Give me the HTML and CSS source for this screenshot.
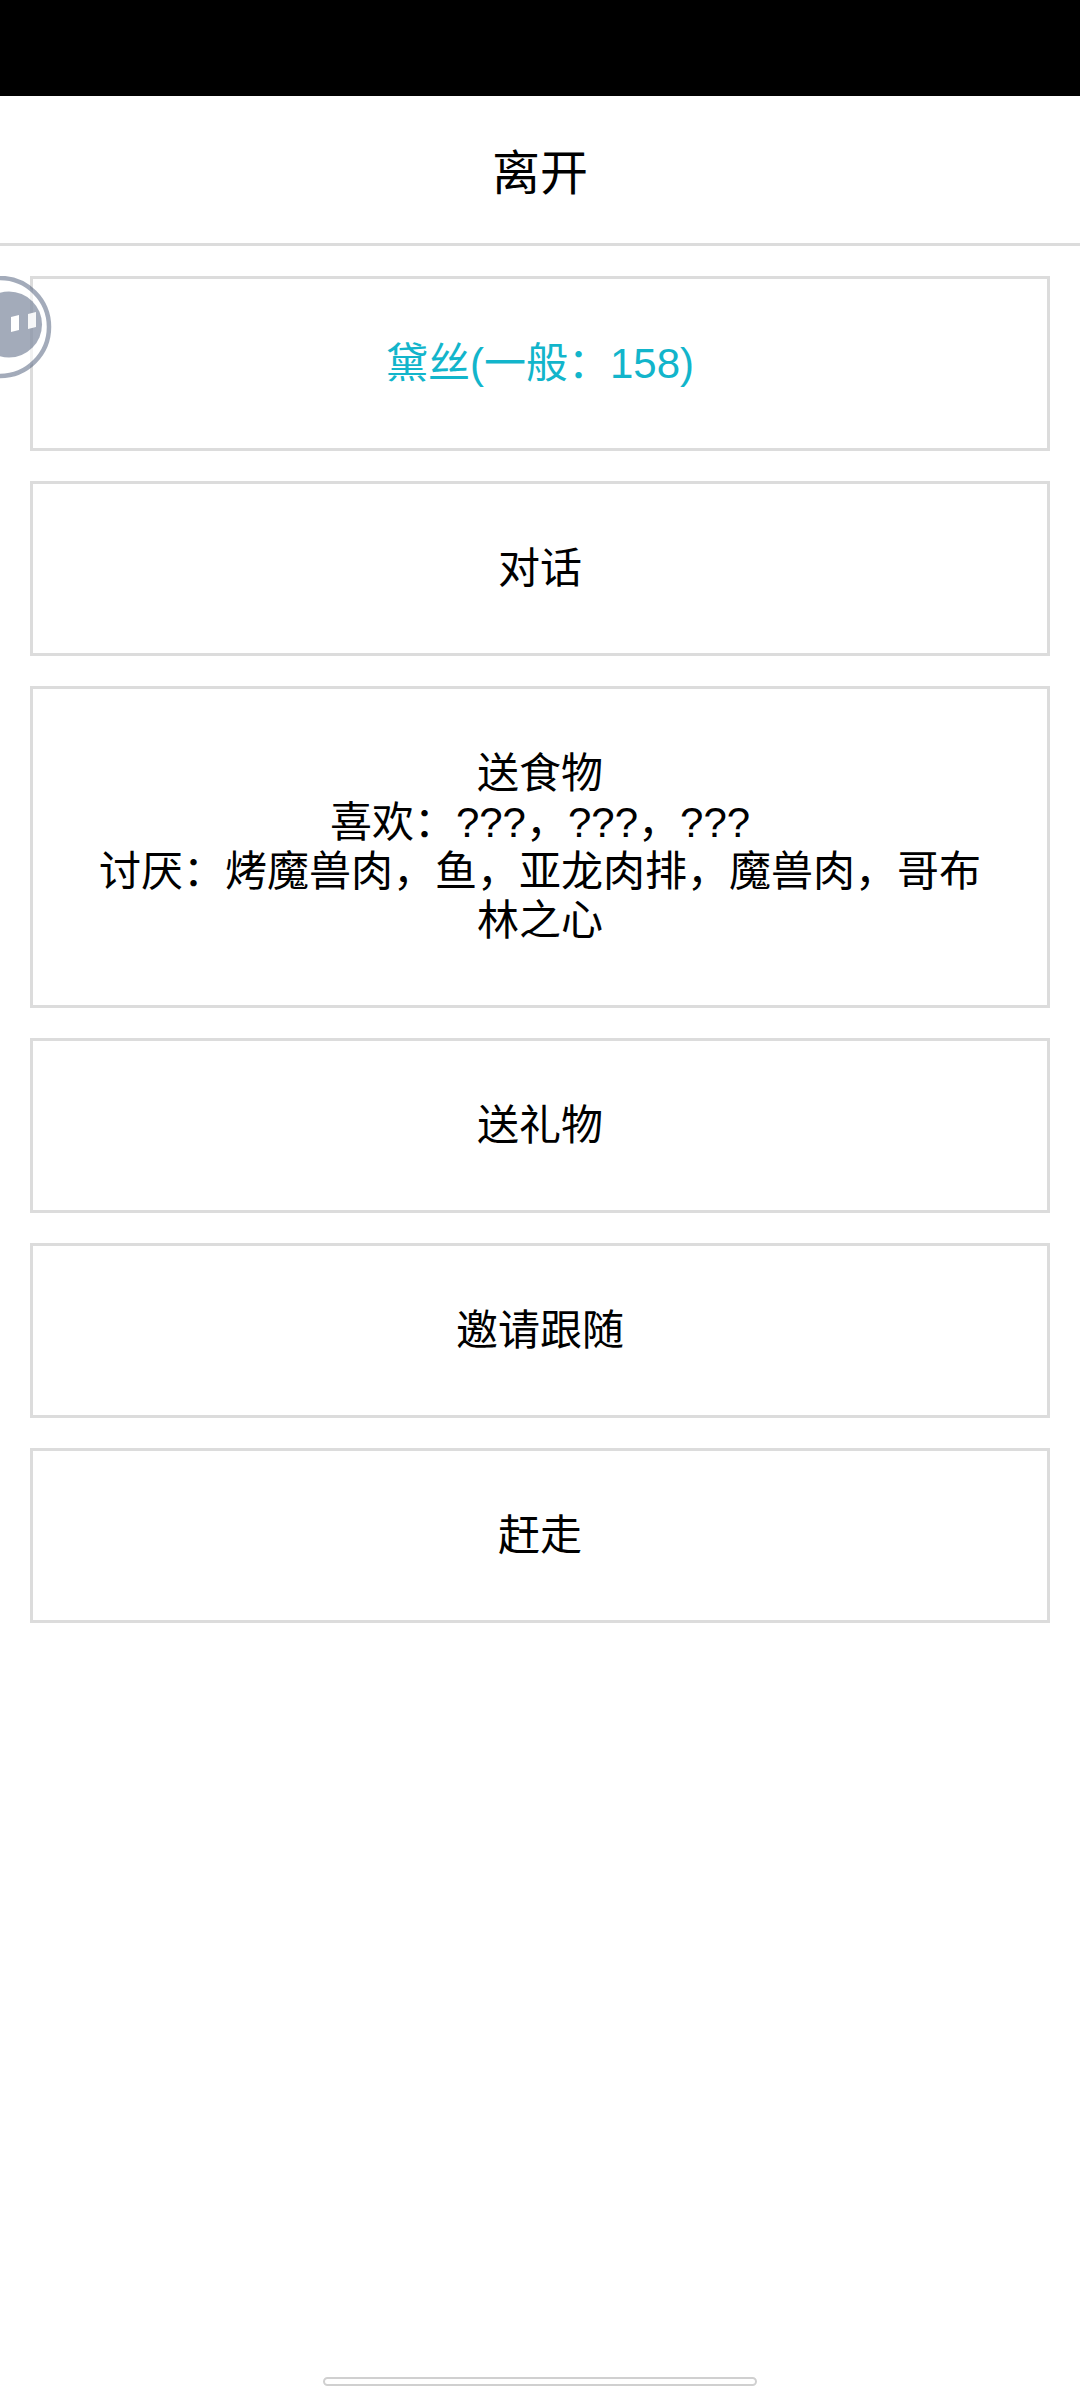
FILE: index.html
```html
<!DOCTYPE html>
<html lang="zh-CN">
<head>
    <meta charset="UTF-8">
    <title>离开</title>
    <link rel="stylesheet" href="styles.css">
</head>
<body>
<div class="status-bar"></div>
<div class="header">离开</div>
<ul class="menu">
    <li class="item item-cyan">黛丝(一般&#65306;158)</li>
    <li class="item">对话</li>
    <li class="item">送食物<br>喜欢&#65306;???&#65292;???&#65292;???<br>讨厌&#65306;烤魔兽肉&#65292;鱼&#65292;亚龙肉排&#65292;魔兽肉&#65292;哥布林之心</li>
    <li class="item">送礼物</li>
    <li class="item">邀请跟随</li>
    <li class="item">赶走</li>
</ul>
<div class="float-ball">
    <svg width="53" height="106" viewBox="0 0 53 106">
        <circle cx="0" cy="51" r="49" fill="#fff" fill-opacity="0.6" stroke="#2a3c60" stroke-opacity="0.43" stroke-width="4.5"/>
        <circle cx="9" cy="48.500" r="33" fill="#2a3c60" fill-opacity="0.43"/>
        <path d="M11 41l8-2v15l-8 2z" fill="#fff"/>
        <path d="M28 38l8-2v15l-8 2z" fill="#fff" fill-opacity="0.9"/>
    </svg>
</div>
<div class="home-bar"></div>
</body>
</html>
```

FILE: styles.css
```css
* {
    margin: 0;
    padding: 0;
    box-sizing: border-box;
}
html, body {
    height: 100%;
}
body {
    position: relative;
    display: flex;
    flex-direction: column;
    background: #fff;
    color: #000;
    font-family: "Liberation Sans", "Noto Sans CJK SC", sans-serif;
    overflow: hidden;
}
.status-bar {
    height: 96px;
    background: #000;
}
.header {
    height: 150px;
    padding-top: 9px;
    line-height: 138px;
    text-align: center;
    font-size: 48px;
    border-bottom: 3px solid #dcdcdc;
}
.menu {
    list-style-type: none;
    display: flex;
    flex-direction: column;
    gap: 30px;
    padding: 30px 30px 0 30px;
    width: 1080px;
}
.item {
    padding: 60px;
    border: 3px solid #dcdcdc;
    font-size: 42px;
    line-height: 49px;
    text-align: center;
}
.item-cyan {
    color: #12b5cb;
}
.float-ball {
    position: absolute;
    left: 0;
    top: 276px;
    width: 53px;
    height: 106px;
}
.float-ball svg {
    display: block;
}
.home-bar {
    position: absolute;
    left: 323px;
    bottom: 2px;
    width: 434px;
    height: 9px;
    border: 2px solid #d0d0d0;
    border-radius: 5px;
    background: #fff;
}
```
